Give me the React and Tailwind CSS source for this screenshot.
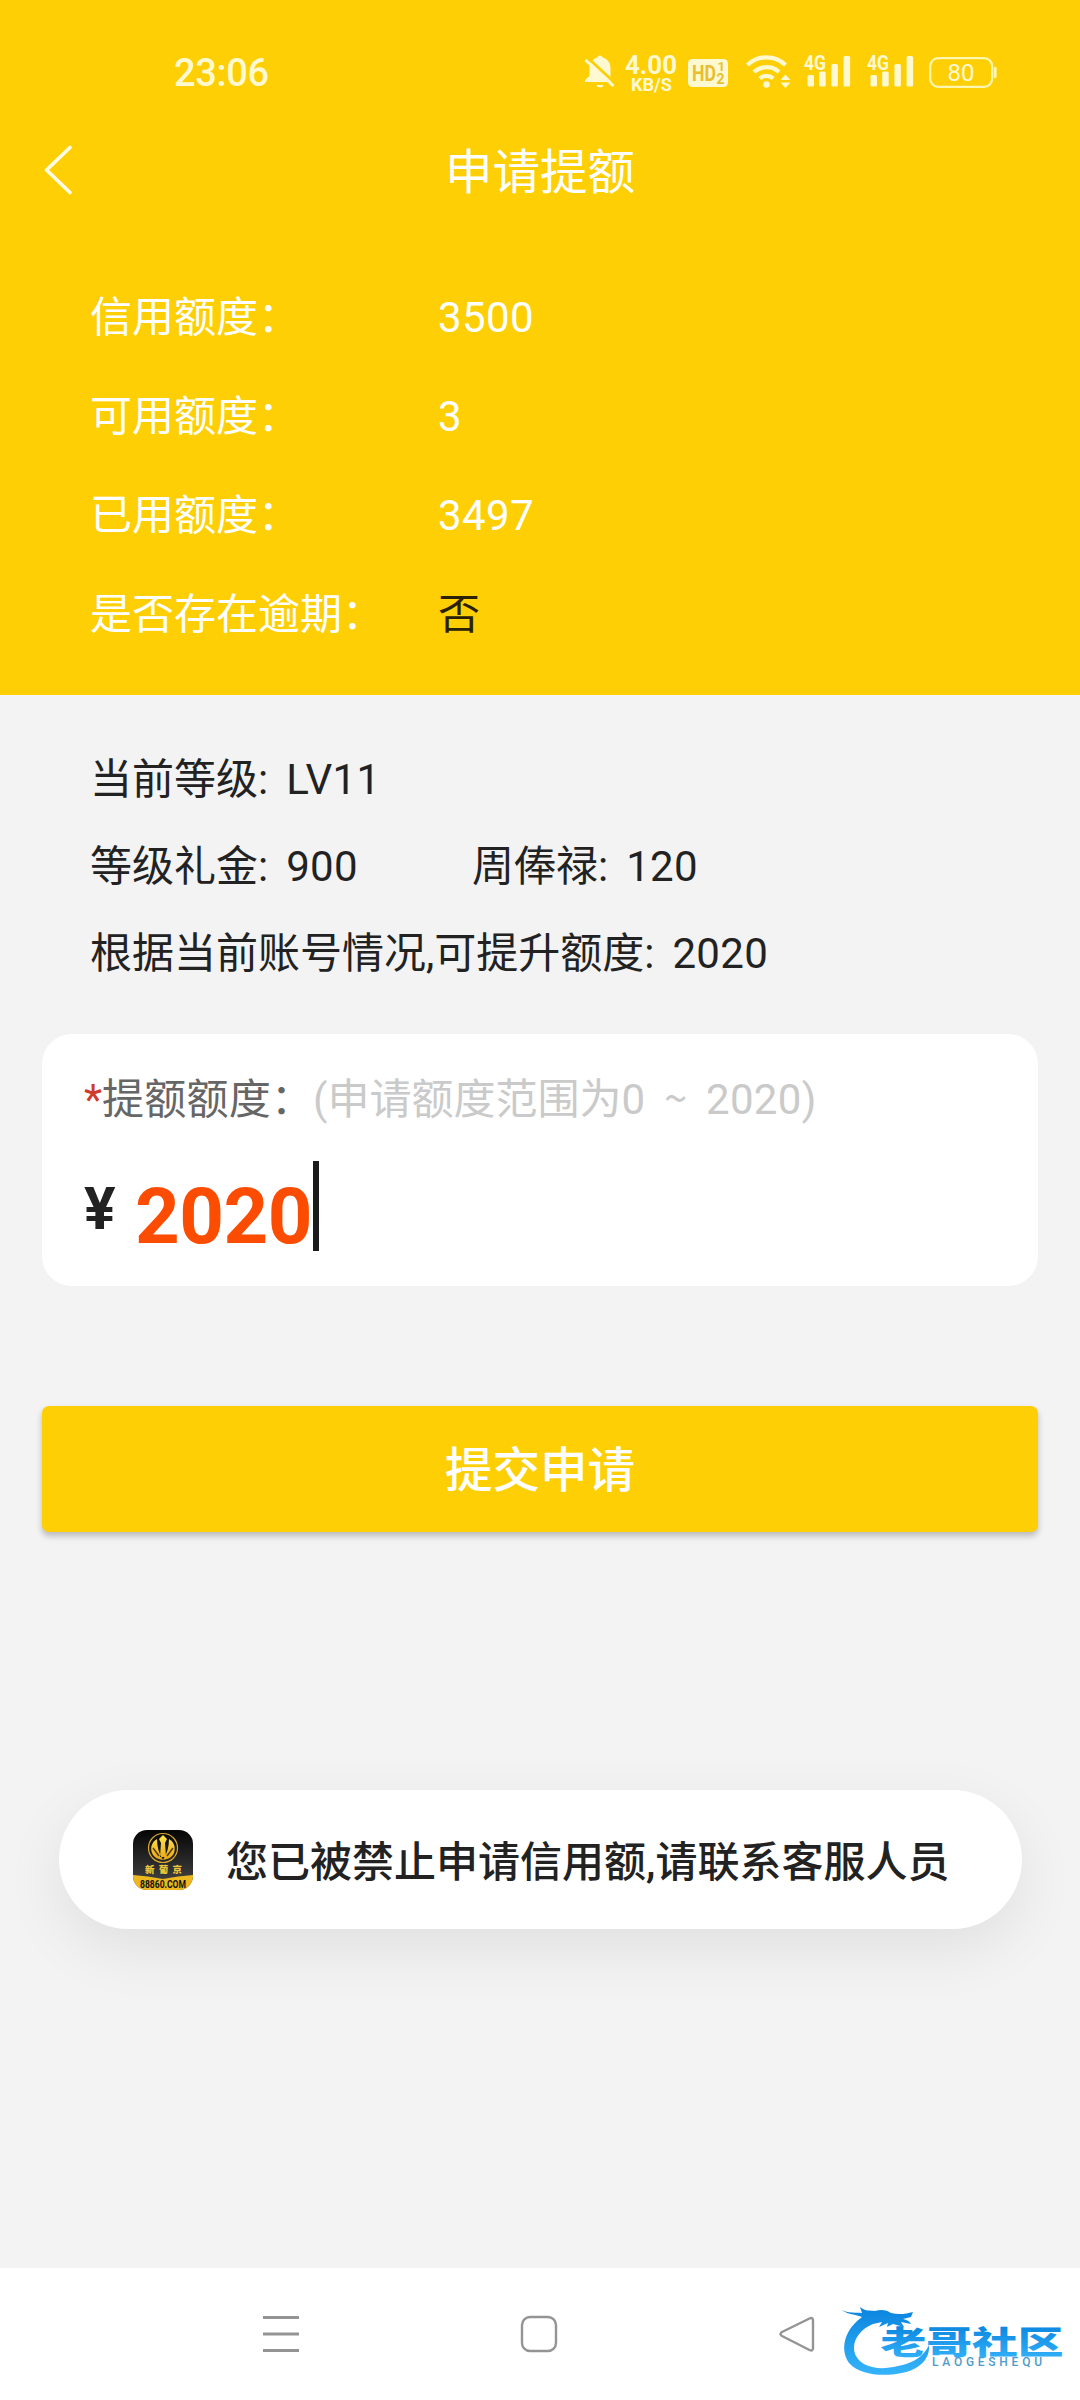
const limits = [
  { label: "信用额度：", value: "3500" },
  { label: "可用额度：", value: "3" },
  { label: "已用额度：", value: "3497" },
  { label: "是否存在逾期：", value: "否", dark: true },
];

function Signal() {
  return (
    <svg className="w-[47px] h-[44px] mt-[-10px]" viewBox="0 -10 47 44" fill="#FFF9D2">
      <text x="0" y="17" fontSize="20" fontWeight="700" textLength="22" lengthAdjust="spacingAndGlyphs">4G</text>
      <rect x="3.5" y="22" width="6.5" height="11.5" rx="1.5" />
      <rect x="15.2" y="18.5" width="6.5" height="15" rx="1.5" />
      <rect x="27.4" y="11" width="6.5" height="22.5" rx="1.5" />
      <rect x="39.6" y="3" width="6.5" height="30.5" rx="1.5" />
    </svg>
  );
}

function StatusBar() {
  return (
    <div className="flex h-[120px] pl-[174px] pt-[53px] text-[#FFF9D2]">
      <div className="w-[410px] text-[38px] leading-[40px] font-medium tracking-[-0.3px]">23:06</div>

      {/* muted bell */}
      <svg className="w-[32px] h-[36px]" viewBox="0 0 32 36" fill="#FFF9D2">
        <path d="M16 2.5c1.5 0 2.3.8 2.5 2 5 1.3 8 5.200 8 10.500v9l3.500 4v1H1v-2l4.500-4V15c0-5.300 3-9.200 8-10.500.2-1.200 1-2 2.500-2z" />
        <path d="M12.500 32h7c-.6 1.700-1.900 2.500-3.500 2.500s-2.900-.8-3.500-2.500z" />
        <path d="M4.500 5.500 32 31" stroke="#FFCF06" strokeWidth="3" />
        <path d="M1.500 7 29.500 33" stroke="#FFF9D2" strokeWidth="3" />
      </svg>

      <svg className="ml-[8px] w-[54px] h-[60px] mt-[-10px]" viewBox="0 -10 54 60" fill="#FFF9D2">
        <text x="1" y="20.500" fontSize="25" fontWeight="700" textLength="52" lengthAdjust="spacingAndGlyphs">4.00</text>
        <text x="7" y="37.500" fontSize="18.500" fontWeight="700" textLength="41" lengthAdjust="spacingAndGlyphs">KB/S</text>
      </svg>

      <svg className="ml-[10px] w-[40px] h-[36px]" viewBox="0 0 40 36">
        <rect x="0" y="6" width="40" height="28" rx="4.500" fill="#FFF9D2" />
        <g fill="#E9BE30" fontWeight="700">
          <text x="4" y="28" fontSize="22" textLength="24" lengthAdjust="spacingAndGlyphs">HD</text>
          <text x="29.500" y="18" fontSize="13">1</text>
          <text x="28.500" y="31" fontSize="14">2</text>
        </g>
      </svg>

      <svg className="ml-[18px] w-[46px] h-[36px]" viewBox="0 0 46 36" fill="none" stroke="#FFF9D2" strokeWidth="4.200">
        <path d="M1.500 12a27.500 27.500 0 0 1 38 0" />
        <path d="M8 19a18.500 18.500 0 0 1 25 0" />
        <path d="M13.800 25.500a10 10 0 0 1 13.400 0" />
        <g fill="#FFF9D2" stroke="none">
          <circle cx="20.500" cy="31.500" r="3.200" />
          <path d="M39.500 21.500l5 5.500h-10zM39.500 35l5-5.500h-10z" />
        </g>
      </svg>

      <div className="ml-[12px]"><Signal /></div>
      <div className="ml-[16px]"><Signal /></div>

      <svg className="ml-[15px] w-[68px] h-[36px]" viewBox="0 0 68 36">
        <rect x="1.200" y="5.200" width="62" height="28.600" rx="8" fill="none" stroke="#FFF6B0" strokeWidth="2.200" />
        <rect x="64.800" y="14" width="2.800" height="11" rx="1.200" fill="#FFF6B0" />
        <text x="32" y="28" fontSize="24" textAnchor="middle" fill="#FFF9D2">80</text>
      </svg>
    </div>
  );
}

function Header() {
  return (
    <div className="flex items-center h-[102px] px-[42px] text-white">
      <svg className="w-[34px] h-[52px] mb-[2px]" viewBox="0 0 34 52" fill="none" stroke="#FFFDE8" strokeWidth="3.600" strokeLinecap="round" strokeLinejoin="round">
        <path d="M28 3.500 4.500 26 28 48.500" />
      </svg>
      <div className="flex-1 text-center text-[47.500px] leading-[60px] pr-[34px] pt-[3px]">申请提额</div>
    </div>
  );
}

function AppIcon() {
  return (
    <svg className="w-[60px] h-[60px]" viewBox="0 0 60 60">
      <defs>
        <linearGradient id="dark" x1="0" y1="0" x2="0" y2="1">
          <stop offset="0" stopColor="#050505" />
          <stop offset="1" stopColor="#4a4a4a" />
        </linearGradient>
        <linearGradient id="gold" x1="0" y1="0" x2="0" y2="1">
          <stop offset="0" stopColor="#FFE54A" />
          <stop offset="1" stopColor="#E7A518" />
        </linearGradient>
        <clipPath id="tile">
          <rect width="60" height="60" rx="14" />
        </clipPath>
      </defs>
      <g clipPath="url(#tile)">
        <rect width="60" height="60" fill="url(#dark)" />
        <path d="M0 45q15 1 30 4 15-3 30-4v15H0z" fill="#EDB81F" />
        <circle cx="30" cy="18" r="14.500" fill="none" stroke="#D9A92B" strokeWidth="1.200" />
        <path d="M30 5l4 4-2 4 1 14h-6l1-14-2-4zM24 9c-5 3-7 8-5 14 2 4 5 6 11 7-4-6-6-13-6-21zM36 9c5 3 7 8 5 14-2 4-5 6-11 7 4-6 6-13 6-21z" fill="url(#gold)" />
        <path d="M20 18l6 8M40 18l-6 8" stroke="#5a3a05" strokeWidth="1.500" />
        <text x="12" y="43" fontSize="9.500" fontWeight="900" fill="#F0C63A" textLength="37">新葡京</text>
        <text x="7" y="57.500" fontSize="10" fontWeight="700" fill="#111" textLength="46" lengthAdjust="spacingAndGlyphs">88860.COM</text>
      </g>
    </svg>
  );
}

function Watermark() {
  return (
    <svg className="w-[226px] h-[80px]" viewBox="0 0 226 80">
      <defs>
        <linearGradient id="blue" x1="0" y1="0" x2="0" y2="1">
          <stop offset="0" stopColor="#0A84DE" />
          <stop offset="1" stopColor="#35B4FA" />
        </linearGradient>
      </defs>
      {/* dragon ring */}
      <g transform="translate(0 2)">
        <path
          fill="url(#blue)"
          d="M0 6c7 4 14 2 20 3l-2-6c6 5 10 3 15 4 6-2 12-1 16 2 8 2 15 1 22-1l-2 5-8 2c3 1 6 1 8 5l-10-2 3 5-11-3-6 3 1-4-9 4 3-5-9 2C16 26 8 40 14 52c6 11 22 15 42 10 16-3 26-10 31-21 1 14-9 24-27 28-20 4-42 2-53-10C-3 45 3 25 20 13 12 10 4 10 0 6z"
        />
      </g>
      <g transform="translate(38.500 51.500) scale(1.430 1)">
        <text fontSize="32" fontWeight="900" fill="url(#blue)">老哥社区</text>
      </g>
      <text x="90" y="64" fontSize="12" fontWeight="500" fill="#4F9BCB" textLength="110">LAOGESHEQU</text>
    </svg>
  );
}

function NavBar() {
  return (
    <div className="flex h-[132px] bg-white pl-[262px] pt-[34px]">
      <svg className="mt-[12px] w-[38px] h-[40px]" viewBox="0 0 38 40" stroke="#949494" strokeWidth="3">
        <path d="M1 3.500h36M1 20h36M1 36.500h36" />
      </svg>
      <svg className="mt-[12px] ml-[220px] w-[38px] h-[40px]" viewBox="0 0 38 40" fill="none" stroke="#949494" strokeWidth="2.400">
        <rect x="2" y="3" width="34" height="34" rx="8" />
      </svg>
      <svg className="mt-[12px] ml-[220px] w-[38px] h-[40px]" viewBox="0 0 38 40" fill="none" stroke="#949494" strokeWidth="2.400" strokeLinejoin="round">
        <path d="M31.500 4.500 4 18q-3 2 0 4l27.500 14q3.500 1.500 3.500-2V6.500q0-3.500-3.500-2z" />
      </svg>
      <div className="ml-[26px]"><Watermark /></div>
    </div>
  );
}

export default function App() {
  return (
    <div className="flex flex-col w-[1080px] h-[2400px] overflow-hidden bg-[#F3F3F3] font-[Roboto,'Noto_Sans_CJK_SC',sans-serif] text-[42px] text-[#222222]">
      <div className="h-[695px] bg-[#FFCF06]">
        <StatusBar />
        <Header />
        <div className="pt-[46px] pl-[90px]">
          {limits.map((row) => (
            <div key={row.label} className="flex h-[99px] leading-[99px] text-white">
              <span className="w-[348px]">{row.label}</span>
              <span className={row.dark ? "text-[#2b2108]" : "tracking-[0.4px]"}>{row.value}</span>
            </div>
          ))}
        </div>
      </div>

      <div className="h-[339px] pl-[90px] pt-[41px] leading-[87px]">
        <div>当前等级:<span className="ml-[18px] tracking-[0.3px]">LV11</span></div>
        <div className="flex">
          <div className="w-[382px]">等级礼金:<span className="ml-[18px] tracking-[0.3px]">900</span></div>
          <div>周俸禄:<span className="ml-[18px] tracking-[0.3px]">120</span></div>
        </div>
        <div>根据当前账号情况,可提升额度:<span className="ml-[18px] tracking-[0.3px]">2020</span></div>
      </div>

      <div className="mx-[42px] h-[252px] rounded-[30px] bg-white pl-[42px] pt-[31px]">
        <div className="leading-[62px] text-[#666666] whitespace-pre">
          <span className="text-[#D03A2B]">*</span><span className="tracking-[0.2px]">提额额度：</span>
          <span className="text-[#CACACA]">(申请额度范围为0<span className="font-['Noto_Sans_CJK_SC']">{"  ~  "}</span><span className="tracking-[0.3px]">2020)</span></span>
        </div>
        <div className="flex mt-[30px]">
          <span className="w-[51px] text-[59px] leading-[96px] font-bold">¥</span>
          <span className="w-[178px] text-[78px] leading-[112px] font-bold tracking-[-0.5px] text-[#FC4C02]">2020</span>
          <span className="w-[6px] h-[90px] bg-[#1b1b1b]"></span>
        </div>
      </div>

      <button className="mx-[42px] mt-[120px] h-[126px] shrink-0 rounded-[7px] bg-[#FFCF06] pt-[6px] text-[47.500px] font-medium text-white shadow-[0_4px_6px_rgba(0,0,0,0.24)]">
        提交申请
      </button>

      <div className="flex items-center shrink-0 mt-[258px] ml-[59px] w-[963px] h-[139px] rounded-full bg-white pl-[74px] shadow-[0_20px_60px_rgba(0,0,0,0.08)]">
        <AppIcon />
        <span className="ml-[33px] pt-[5px] font-medium">您已被禁止申请信用额,请联系客服人员</span>
      </div>

      <div className="mt-auto">
        <NavBar />
      </div>
    </div>
  );
}
